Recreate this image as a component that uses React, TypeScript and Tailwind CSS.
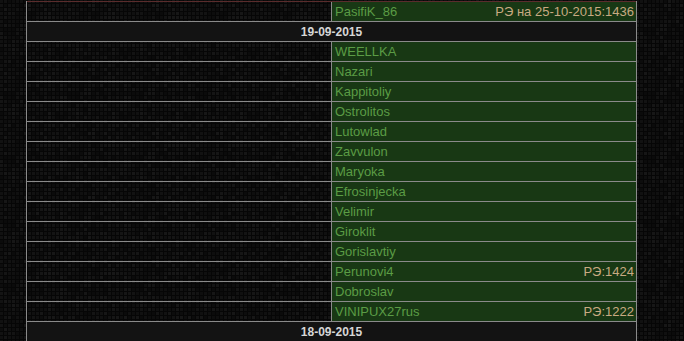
import React from "react";

type Ryad =
  | { tip: "data"; tekst: string }
  | { tip: "imya"; imya: string; re?: string; pervyi?: boolean };

const RYADY: Ryad[] = [
  { tip: "imya", imya: "PasifiK_86", re: "РЭ на 25-10-2015:1436", pervyi: true },
  { tip: "data", tekst: "19-09-2015" },
  { tip: "imya", imya: "WEELLKA" },
  { tip: "imya", imya: "Nazari" },
  { tip: "imya", imya: "Kappitoliy" },
  { tip: "imya", imya: "Ostrolitos" },
  { tip: "imya", imya: "Lutowlad" },
  { tip: "imya", imya: "Zavvulon" },
  { tip: "imya", imya: "Maryoka" },
  { tip: "imya", imya: "Efrosinjecka" },
  { tip: "imya", imya: "Velimir" },
  { tip: "imya", imya: "Giroklit" },
  { tip: "imya", imya: "Gorislavtiy" },
  { tip: "imya", imya: "Perunovi4", re: "РЭ:1424" },
  { tip: "imya", imya: "Dobroslav" },
  { tip: "imya", imya: "VINIPUX27rus", re: "РЭ:1222" },
  { tip: "data", tekst: "18-09-2015" },
];

// Фон из мелких квадратиков, плитка 64x64 повторяется
function Fon() {
  let seed = 7;
  const rnd = () => {
    seed = (seed * 9301 + 49297) % 233280;
    return seed / 233280;
  };
  const kletki: { x: number; y: number; c: string }[] = [];
  for (let y = 0; y < 16; y++) {
    for (let x = 0; x < 16; x++) {
      const v = 11 + Math.floor(rnd() * 13);
      const h = v.toString(16).padStart(2, "0");
      kletki.push({ x: x * 4, y: y * 4, c: `#${h}${h}${h}` });
    }
  }
  return (
    <svg className="absolute inset-0" width="684" height="341">
      <defs>
        <pattern id="kv" width="64" height="64" patternUnits="userSpaceOnUse">
          <rect width="64" height="64" fill="#060606" />
          {kletki.map((k, i) => (
            <rect key={i} x={k.x} y={k.y} width="3" height="3" fill={k.c} />
          ))}
        </pattern>
      </defs>
      <rect width="684" height="341" fill="url(#kv)" />
    </svg>
  );
}

export default function App() {
  return (
    <div className="relative w-[684px] h-[341px] overflow-hidden bg-[#060606] font-['Liberation_Sans',Arial,sans-serif]">
      <Fon />
      <div className="relative pt-[1px] pl-[26px]">
        <div className="w-[611px] border-l border-r border-[#8a8a8a]">
          {RYADY.map((r, i) =>
            r.tip === "data" ? (
              <div
                key={i}
                className="h-[20px] border-b border-[#8a8a8a] bg-[#131313] flex items-center justify-center pt-[1px] text-[12px] font-bold text-[#d6d6d6]"
              >
                {r.tekst}
              </div>
            ) : (
              <div
                key={i}
                className={
                  "flex border-b border-[#8a8a8a] " +
                  (r.pervyi ? "h-[21px] border-t border-t-[#5a2c2c]" : "h-[20px]")
                }
              >
                <div className="w-[304px]" />
                <div className="flex-1 border-l border-[#8a8a8a] bg-[#183814] flex items-center justify-between pl-[3px] pr-[2px] pt-[1px] text-[13px]">
                  <span className="text-[#5b9c45]">{r.imya}</span>
                  {r.re && <span className="text-[#c8aa82]">{r.re}</span>}
                </div>
              </div>
            )
          )}
        </div>
      </div>
    </div>
  );
}
